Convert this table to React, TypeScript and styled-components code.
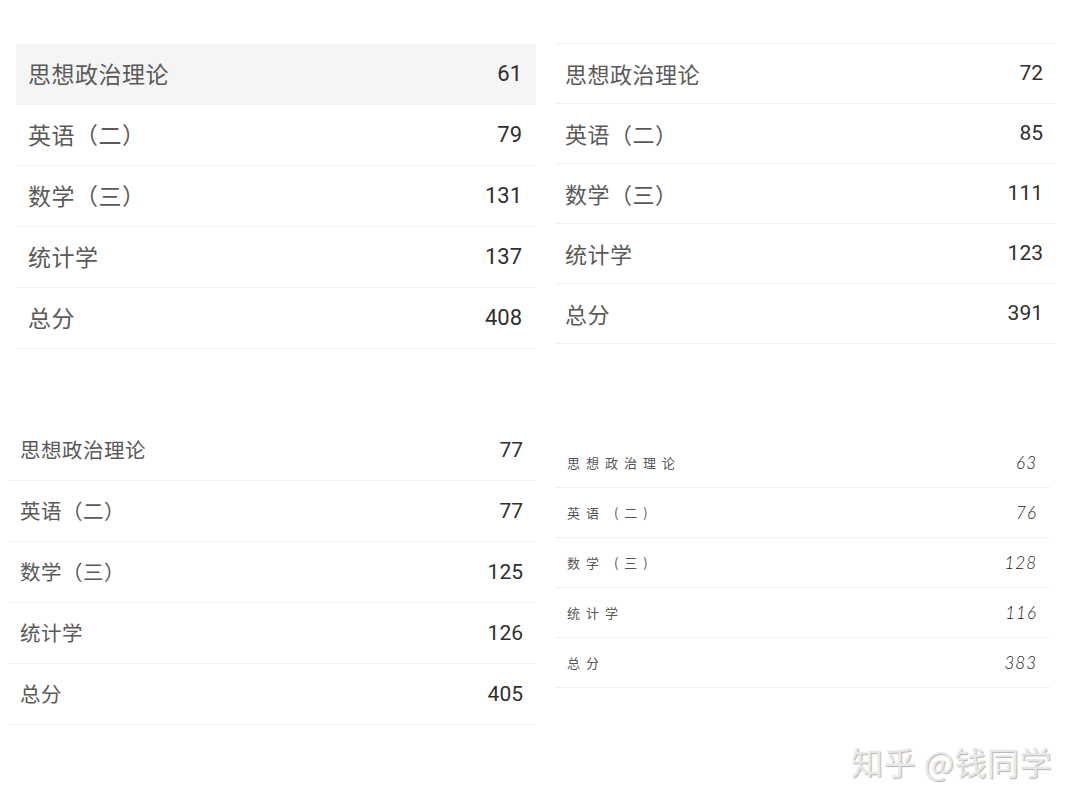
import React from 'react';
import styled, { createGlobalStyle } from 'styled-components';

const GlobalStyle = createGlobalStyle`
  html, body {
    margin: 0;
    padding: 0;
    background: #ffffff;
  }
  body {
    font-family: "Noto Sans CJK SC", "Noto Sans", sans-serif;
  }
`;

const Page = styled.div`
  width: 1080px;
  height: 810px;
  display: grid;
  grid-template-columns: 540px 540px;
  grid-template-rows: 400px 410px;
  background: #ffffff;
  overflow: hidden;
`;

const Cell = styled.div`
  display: flex;
  flex-direction: column;
`;

const Panel = styled.div<{ $top: number; $left: number; $width: number; $topLine?: boolean }>`
  margin-top: ${(p) => p.$top}px;
  margin-left: ${(p) => p.$left}px;
  width: ${(p) => p.$width}px;
  border-top: ${(p) => (p.$topLine ? '1px solid #f0f0f0' : 'none')};
  display: flex;
  flex-direction: column;
`;

const Row = styled.div<{ $h: number; $pl: number; $pr: number; $shade?: boolean }>`
  box-sizing: border-box;
  height: ${(p) => p.$h}px;
  padding: 0 ${(p) => p.$pr}px 0 ${(p) => p.$pl}px;
  display: flex;
  align-items: center;
  justify-content: space-between;
  border-bottom: 1px solid #f0f0f0;
  background: ${(p) => (p.$shade ? '#f5f5f5' : 'transparent')};
`;

const Label = styled.span<{ $size: number }>`
  font-family: "Noto Sans CJK SC", sans-serif;
  font-size: ${(p) => p.$size}px;
  line-height: 1;
  color: #5a5a5a;
  letter-spacing: 0.5px;
  margin-bottom: 2px;
`;

const Score = styled.span<{ $size: number }>`
  font-family: Roboto, "Noto Sans", sans-serif;
  font-size: ${(p) => p.$size}px;
  line-height: 1;
  color: #2f2f2f;
`;

const HandLabel = styled.span`
  font-family: "Noto Sans CJK SC", sans-serif;
  font-weight: 400;
  font-size: 13px;
  letter-spacing: 6px;
  color: #555555;
`;

const HandScore = styled.span`
  font-family: Lato, "Open Sans", sans-serif;
  font-weight: 300;
  font-style: italic;
  font-size: 17px;
  color: #222222;
  letter-spacing: 1px;
`;

const Watermark = styled.div`
  margin-top: auto;
  margin-bottom: 26px;
  align-self: flex-end;
  margin-right: 28px;
  font-family: "Noto Sans CJK SC", sans-serif;
  font-size: 32px;
  color: #e8e8e8;
  text-shadow: 1px 1px 1px #b5b5b5;
  letter-spacing: 0.5px;
`;

type Item = [string, string];

type Spec = {
  top: number;
  left: number;
  width: number;
  rowH: number;
  pl: number;
  pr: number;
  size: number;
  numSize: number;
  topLine?: boolean;
  shadeFirst?: boolean;
  items: Item[];
};

const subjects = ['思想政治理论', '英语（二）', '数学（三）', '统计学', '总分'];

const withScores = (scores: string[]): Item[] => subjects.map((s, i) => [s, scores[i]]);

const ScoreTable: React.FC<{ spec: Spec }> = ({ spec }) => (
  <Panel $top={spec.top} $left={spec.left} $width={spec.width} $topLine={spec.topLine}>
    {spec.items.map(([name, val], i) => (
      <Row key={name} $h={spec.rowH} $pl={spec.pl} $pr={spec.pr} $shade={spec.shadeFirst && i === 0}>
        <Label $size={spec.size}>{name}</Label>
        <Score $size={spec.numSize}>{val}</Score>
      </Row>
    ))}
  </Panel>
);

const handItems: Item[] = [
  ['思想政治理论', '63'],
  ['英语 (二)', '76'],
  ['数学 (三)', '128'],
  ['统计学', '116'],
  ['总分', '383'],
];

export default function App() {
  return (
    <>
      <GlobalStyle />
      <Page>
        <Cell>
          <ScoreTable
            spec={{
              top: 44, left: 16, width: 520, rowH: 61, pl: 12, pr: 14,
              size: 23, numSize: 22, shadeFirst: true,
              items: withScores(['61', '79', '131', '137', '408']),
            }}
          />
        </Cell>
        <Cell>
          <ScoreTable
            spec={{
              top: 43, left: 16, width: 499, rowH: 60, pl: 9, pr: 12,
              size: 22, numSize: 21, topLine: true,
              items: withScores(['72', '85', '111', '123', '391']),
            }}
          />
        </Cell>
        <Cell>
          <ScoreTable
            spec={{
              top: 20, left: 8, width: 527, rowH: 61, pl: 12, pr: 12,
              size: 20.5, numSize: 21,
              items: withScores(['77', '77', '125', '126', '405']),
            }}
          />
        </Cell>
        <Cell>
          <Panel $top={38} $left={15} $width={495}>
            {handItems.map(([name, val]) => (
              <Row key={name} $h={50} $pl={12} $pr={13}>
                <HandLabel>{name}</HandLabel>
                <HandScore>{val}</HandScore>
              </Row>
            ))}
          </Panel>
          <Watermark>知乎 @钱同学</Watermark>
        </Cell>
      </Page>
    </>
  );
}
